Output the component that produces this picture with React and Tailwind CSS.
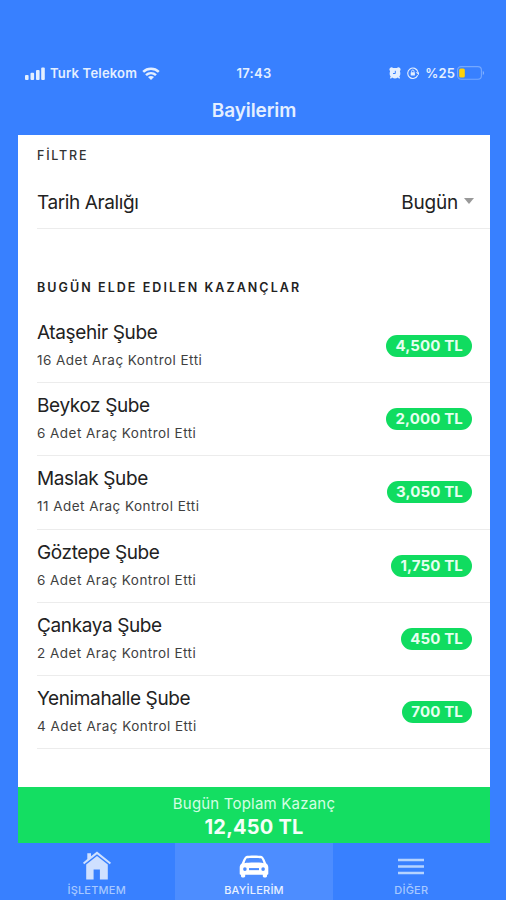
const rows = [
  { name: "Ataşehir Şube", count: 16, total: "4,500 TL" },
  { name: "Beykoz Şube", count: 6, total: "2,000 TL" },
  { name: "Maslak Şube", count: 11, total: "3,050 TL" },
  { name: "Göztepe Şube", count: 6, total: "1,750 TL" },
  { name: "Çankaya Şube", count: 2, total: "450 TL" },
  { name: "Yenimahalle Şube", count: 4, total: "700 TL" },
];

function Signal() {
  return (
    <svg className="h-[13px] w-5" viewBox="0 0 20 13" fill="currentColor">
      <rect x="0" y="8" width="3.6" height="5" rx="1" />
      <rect x="5.5" y="5.8" width="3.6" height="7.2" rx="1" />
      <rect x="11" y="3" width="3.6" height="10" rx="1" />
      <rect x="16.2" y="0.5" width="3.6" height="12.5" rx="1" />
    </svg>
  );
}

function Wifi() {
  return (
    <svg className="h-[13px] w-[18px]" viewBox="0 0 18 13" fill="none" stroke="currentColor" strokeWidth="2.5">
      <path d="M1.200 4.900C5.500.8 12.500.8 16.800 4.900" />
      <path d="M4 8.200c2.900-2.700 7.100-2.700 10 0" />
      <path d="M9 12.900 6 10.100c1.700-1.500 4.300-1.500 6 0Z" fill="currentColor" stroke="none" />
    </svg>
  );
}

function Alarm() {
  return (
    <svg className="h-3 w-3" viewBox="0 0 12 12">
      <path d="M.4 2.800C.3 1.200 1.500.2 3 .3l1 .7h4l1-.7c1.500-.1 2.700.9 2.600 2.500l-.7 1.500c.8 2.100.5 3.900-.6 5.300l.8 1.300-1 .8-1.200-1.100c-1.800 1.200-4 1.200-5.800 0l-1.200 1.100-1-.8.8-1.300C.6 8.200.3 6.400 1.100 4.300Z" fill="currentColor" />
      <path d="M6.300 3.800v2.700H4" fill="none" stroke="#3880ff" strokeWidth="1" />
    </svg>
  );
}

function RotationLock() {
  return (
    <svg className="h-3 w-3" viewBox="0 0 12 12" fill="none" stroke="currentColor">
      <path d="M10.700 8.300A5.200 5.200 0 1 1 10.900 4.800" strokeWidth="1.100" />
      <path d="M8.700 5.200H12v3Z" fill="currentColor" stroke="none" />
      <rect x="3.700" y="5.300" width="4.200" height="3.200" rx=".5" fill="currentColor" stroke="none" />
      <path d="M4.600 5.500V4.300a1.200 1.200 0 0 1 2.400 0v1.200" strokeWidth=".9" />
    </svg>
  );
}

function Battery() {
  return (
    <svg className="h-[14px] w-[28px]" viewBox="0 0 28 14">
      <rect x=".6" y=".6" width="23.800" height="12.600" rx="3.500" fill="none" stroke="#75a8ff" strokeWidth="1.100" />
      <rect x="2.200" y="2.400" width="5.600" height="9" rx="1.500" fill="#ffd20a" />
      <path d="M25.800 4.800c1.600.8 1.600 3.500 0 4.300Z" fill="#88b4ff" />
    </svg>
  );
}

function Home() {
  return (
    <svg className="h-[29px] w-7" viewBox="0 0 28 29" fill="currentColor">
      <path d="M14 .5 8 5.200V2.200H4.300v5.900L0 11.700l1.200 1.500L14 3.200l12.800 10 1.200-1.500Z" />
      <path d="M14 5 3.200 13.400V28.500h7.400V18.500h6.300v10h7.900V13.400Z" />
    </svg>
  );
}

function Car() {
  return (
    <svg className="h-[23px] w-[30px]" viewBox="0 0 30 22" preserveAspectRatio="none">
      <path d="M7.200.9C9.500.2 20.500.2 22.800.9c1.900.6 3.700 5.300 4.500 7.300 1.400 1.100 2 2.100 2 3.800v5.600c0 .9-.5 1.400-1.300 1.400v1.400c0 1.600-4.200 1.600-4.200 0V19H6.200v1.400c0 1.600-4.200 1.600-4.200 0V19c-.8 0-1.300-.5-1.300-1.400V12c0-1.700.6-2.700 2-3.800C3.500 6.200 5.300 1.500 7.200.9Z" fill="currentColor" />
      <path d="M7.800 3.200c3-.6 11.400-.6 14.400 0 .8.500 1.800 3 2.300 4.600-4-.8-15-.8-19 0 .5-1.600 1.500-4.100 2.300-4.600Z" fill="#4d8dff" />
      <circle cx="5.900" cy="13.500" r="1.800" fill="#4d8dff" />
      <circle cx="24.100" cy="13.500" r="1.800" fill="#4d8dff" />
      <path d="M10 13.500h10" stroke="#4d8dff" strokeWidth="2" />
    </svg>
  );
}

function Menu() {
  return (
    <svg className="h-[17px] w-[26px]" viewBox="0 0 26 17" stroke="currentColor" strokeWidth="2.300">
      <path d="M0 2h26M0 8.500h26M0 15h26" />
    </svg>
  );
}

export default function App() {
  return (
    <div className="flex h-[900px] w-[506px] flex-col overflow-hidden bg-[#3880ff] pl-[18px] pr-4 font-['Inter',sans-serif] whitespace-nowrap">
      <header className="h-[135px] shrink-0 pt-[65px] text-[#e4efff]">
        <div className="grid h-4 grid-cols-[1fr_auto_1fr] items-center text-[13px] font-semibold leading-4">
          <div className="flex items-center pl-[7px]">
            <Signal />
            <span className="ml-[5px] mr-[5px] tracking-[0.2px]">Turk Telekom</span>
            <Wifi />
          </div>
          <span className="tracking-[0.3px]">17:43</span>
          <div className="flex items-center justify-end pr-[5px]">
            <Alarm />
            <span className="ml-[6px] mr-[6px]"><RotationLock /></span>
            <span className="mr-[2px] tracking-[0.1px]">%25</span>
            <Battery />
          </div>
        </div>
        <h1 className="mt-[17px] text-center text-[19px] font-semibold leading-[25px] tracking-[-0.1px]">Bayilerim</h1>
      </header>

      <main className="h-[652px] shrink-0 bg-white pl-[19px] text-[#222]">
        <h2 className="pt-[13px] text-[12.5px] font-medium leading-4 tracking-[1.8px] text-[#333]">FİLTRE</h2>
        <div className="mt-[14px] flex h-[51px] items-center justify-between border-b border-[#ececec] pr-4 pt-px text-[19px] tracking-[-0.4px]">
          <span>Tarih Aralığı</span>
          <span className="flex items-center tracking-[-0.2px]">
            Bugün
            <svg className="mb-[6px] ml-[6px] h-[6px] w-[10px]" viewBox="0 0 10 6"><path d="M0 0h10L5 6Z" fill="#999" /></svg>
          </span>
        </div>
        <h2 className="mt-[51px] text-[12.5px] font-semibold leading-4 tracking-[2.06px]">BUGÜN ELDE EDILEN KAZANÇLAR</h2>
        <ul className="mt-[14px]">
          {rows.map((row) => (
            <li key={row.name} className="flex h-[73.2px] items-center justify-between border-b border-[#ececec] pr-[18px]">
              <div>
                <div className="text-[19px] leading-[23px] tracking-[-0.38px]">{row.name}</div>
                <div className="mt-[5px] text-[13.5px] leading-[22px] tracking-[0.46px] text-[#3f3f3f]">{row.count} Adet Araç Kontrol Etti</div>
              </div>
              <span className="flex h-[22px] items-center rounded-full bg-[#10dc60] px-[9px] pb-px text-[15px] font-bold leading-none tracking-[0.15px] text-[#e6fff0]">{row.total}</span>
            </li>
          ))}
        </ul>
      </main>

      <section className="h-14 shrink-0 bg-[#14de62] pt-[6px] text-center text-[#d3ffe2]">
        <div className="text-[15px] leading-[21px] tracking-[0.2px]">Bugün Toplam Kazanç</div>
        <div className="text-[20px] font-bold leading-[26px] tracking-[0.2px] text-[#f4fff8]">12,450 TL</div>
      </section>

      <nav className="grid h-[57px] shrink-0 grid-cols-3 text-[11px] font-medium leading-4 text-[#a6c8ff]">
        <div className="flex flex-col items-center">
          <span className="flex h-[39px] items-end pb-[2px] text-[#cfe0ff]"><Home /></span>
          <span className="tracking-[0.2px]">İŞLETMEM</span>
        </div>
        <div className="flex flex-col items-center bg-[#4d8dff] text-[#e8f1ff]">
          <span className="flex h-[39px] items-center pt-[8px] text-white"><Car /></span>
          <span className="tracking-[0.2px]">BAYİLERİM</span>
        </div>
        <div className="flex flex-col items-center">
          <span className="flex h-[39px] items-center pt-[7px] text-[#b5d3ff]"><Menu /></span>
          <span className="tracking-[0.2px]">DİĞER</span>
        </div>
      </nav>
    </div>
  );
}
